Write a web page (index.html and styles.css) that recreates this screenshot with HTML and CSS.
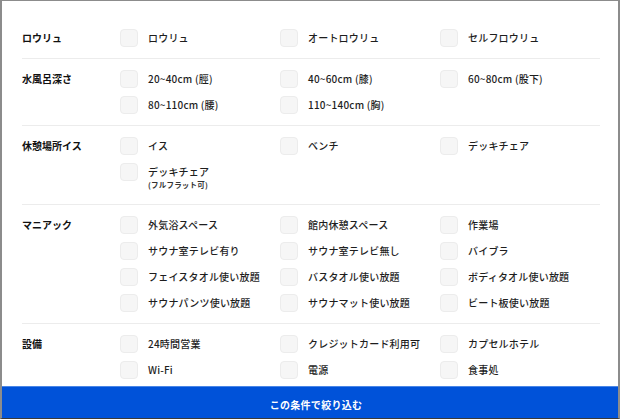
FILE: index.html
```html
<!DOCTYPE html>
<html lang="ja">
<head>
    <meta charset="UTF-8">
    <meta name="viewport" content="width=device-width, initial-scale=1.0">
    <title>こだわり条件</title>
    <link rel="stylesheet" href="styles.css">
</head>
<body>
    <div class="filter-modal">
        <div class="filter-body">
            <div class="filter-section">
                <div class="section-title">ロウリュ</div>
                <div class="option-grid">
                    <label class="option"><span class="box"></span><span class="option-text">ロウリュ</span></label>
                    <label class="option"><span class="box"></span><span class="option-text">オートロウリュ</span></label>
                    <label class="option"><span class="box"></span><span class="option-text">セルフロウリュ</span></label>
                </div>
            </div>

            <div class="filter-section">
                <div class="section-title">水風呂深さ</div>
                <div class="option-grid">
                    <label class="option"><span class="box"></span><span class="option-text">20~40cm (脛)</span></label>
                    <label class="option"><span class="box"></span><span class="option-text">40~60cm (膝)</span></label>
                    <label class="option"><span class="box"></span><span class="option-text">60~80cm (股下)</span></label>
                    <label class="option"><span class="box"></span><span class="option-text">80~110cm (腰)</span></label>
                    <label class="option"><span class="box"></span><span class="option-text">110~140cm (胸)</span></label>
                </div>
            </div>

            <div class="filter-section">
                <div class="section-title">休憩場所イス</div>
                <div class="option-grid">
                    <label class="option"><span class="box"></span><span class="option-text">イス</span></label>
                    <label class="option"><span class="box"></span><span class="option-text">ベンチ</span></label>
                    <label class="option"><span class="box"></span><span class="option-text">デッキチェア</span></label>
                    <label class="option"><span class="box"></span><span class="option-text">デッキチェア<small class="option-note">(フルフラット可)</small></span></label>
                </div>
            </div>

            <div class="filter-section">
                <div class="section-title">マニアック</div>
                <div class="option-grid">
                    <label class="option"><span class="box"></span><span class="option-text">外気浴スペース</span></label>
                    <label class="option"><span class="box"></span><span class="option-text">館内休憩スペース</span></label>
                    <label class="option"><span class="box"></span><span class="option-text">作業場</span></label>
                    <label class="option"><span class="box"></span><span class="option-text">サウナ室テレビ有り</span></label>
                    <label class="option"><span class="box"></span><span class="option-text">サウナ室テレビ無し</span></label>
                    <label class="option"><span class="box"></span><span class="option-text">バイブラ</span></label>
                    <label class="option"><span class="box"></span><span class="option-text">フェイスタオル使い放題</span></label>
                    <label class="option"><span class="box"></span><span class="option-text">バスタオル使い放題</span></label>
                    <label class="option"><span class="box"></span><span class="option-text">ボディタオル使い放題</span></label>
                    <label class="option"><span class="box"></span><span class="option-text">サウナパンツ使い放題</span></label>
                    <label class="option"><span class="box"></span><span class="option-text">サウナマット使い放題</span></label>
                    <label class="option"><span class="box"></span><span class="option-text">ビート板使い放題</span></label>
                </div>
            </div>

            <div class="filter-section">
                <div class="section-title">設備</div>
                <div class="option-grid">
                    <label class="option"><span class="box"></span><span class="option-text">24時間営業</span></label>
                    <label class="option"><span class="box"></span><span class="option-text">クレジットカード利用可</span></label>
                    <label class="option"><span class="box"></span><span class="option-text">カプセルホテル</span></label>
                    <label class="option"><span class="box"></span><span class="option-text">Wi-Fi</span></label>
                    <label class="option"><span class="box"></span><span class="option-text">電源</span></label>
                    <label class="option"><span class="box"></span><span class="option-text">食事処</span></label>
                </div>
            </div>
        </div>

        <button class="apply-button">この条件で絞り込む</button>
    </div>
</body>
</html>
```

FILE: styles.css
```css
* {
    margin: 0;
    padding: 0;
    box-sizing: border-box;
    font-family: "Noto Sans CJK JP", "Noto Sans", sans-serif;
}

html, body {
    height: 100%;
}

body {
    background-color: #fff;
    overflow: hidden;
}

.filter-modal {
    height: 100%;
    display: flex;
    flex-direction: column;
    border: 2px solid #8c8c8c;
    border-top-width: 1px;
    border-bottom: 1px solid #3a3a3a;
    background-color: #fff;
}

.filter-body {
    flex: 1;
    overflow: hidden;
    padding: 17px 18px 0 20px;
}

.filter-section {
    display: flex;
    padding: 7px 0;
    border-bottom: 1px solid #ececec;
}

.filter-section:last-child {
    border-bottom: none;
}

.section-title {
    width: 98px;
    flex-shrink: 0;
    font-size: 10px;
    font-weight: bold;
    color: #111;
    line-height: 26px;
}

.option-grid {
    display: grid;
    grid-template-columns: repeat(3, 160px);
    grid-auto-rows: minmax(26px, auto);
}

.option {
    display: flex;
    align-items: flex-start;
    cursor: pointer;
}

.box {
    width: 18px;
    height: 18px;
    margin-top: 4px;
    margin-right: 10px;
    flex-shrink: 0;
    background-color: #f6f6f6;
    border: 1px solid #ececec;
    border-radius: 4px;
}

.option-text {
    font-size: 10px;
    font-weight: 500;
    color: #1e1e1e;
    line-height: 26px;
    letter-spacing: 0.2px;
}

.option-note {
    display: block;
    font-size: 7.5px;
    font-weight: bold;
    line-height: 8px;
    margin-top: -4px;
    padding-bottom: 8px;
    color: #333;
}

.apply-button {
    height: 32px;
    flex-shrink: 0;
    border: none;
    border-top: 1px solid #4a86e6;
    background-color: #0052d9;
    color: #fff;
    font-size: 10px;
    font-weight: bold;
    letter-spacing: 0.3px;
    padding: 4px 0 0 12px;
    cursor: pointer;
}
```
